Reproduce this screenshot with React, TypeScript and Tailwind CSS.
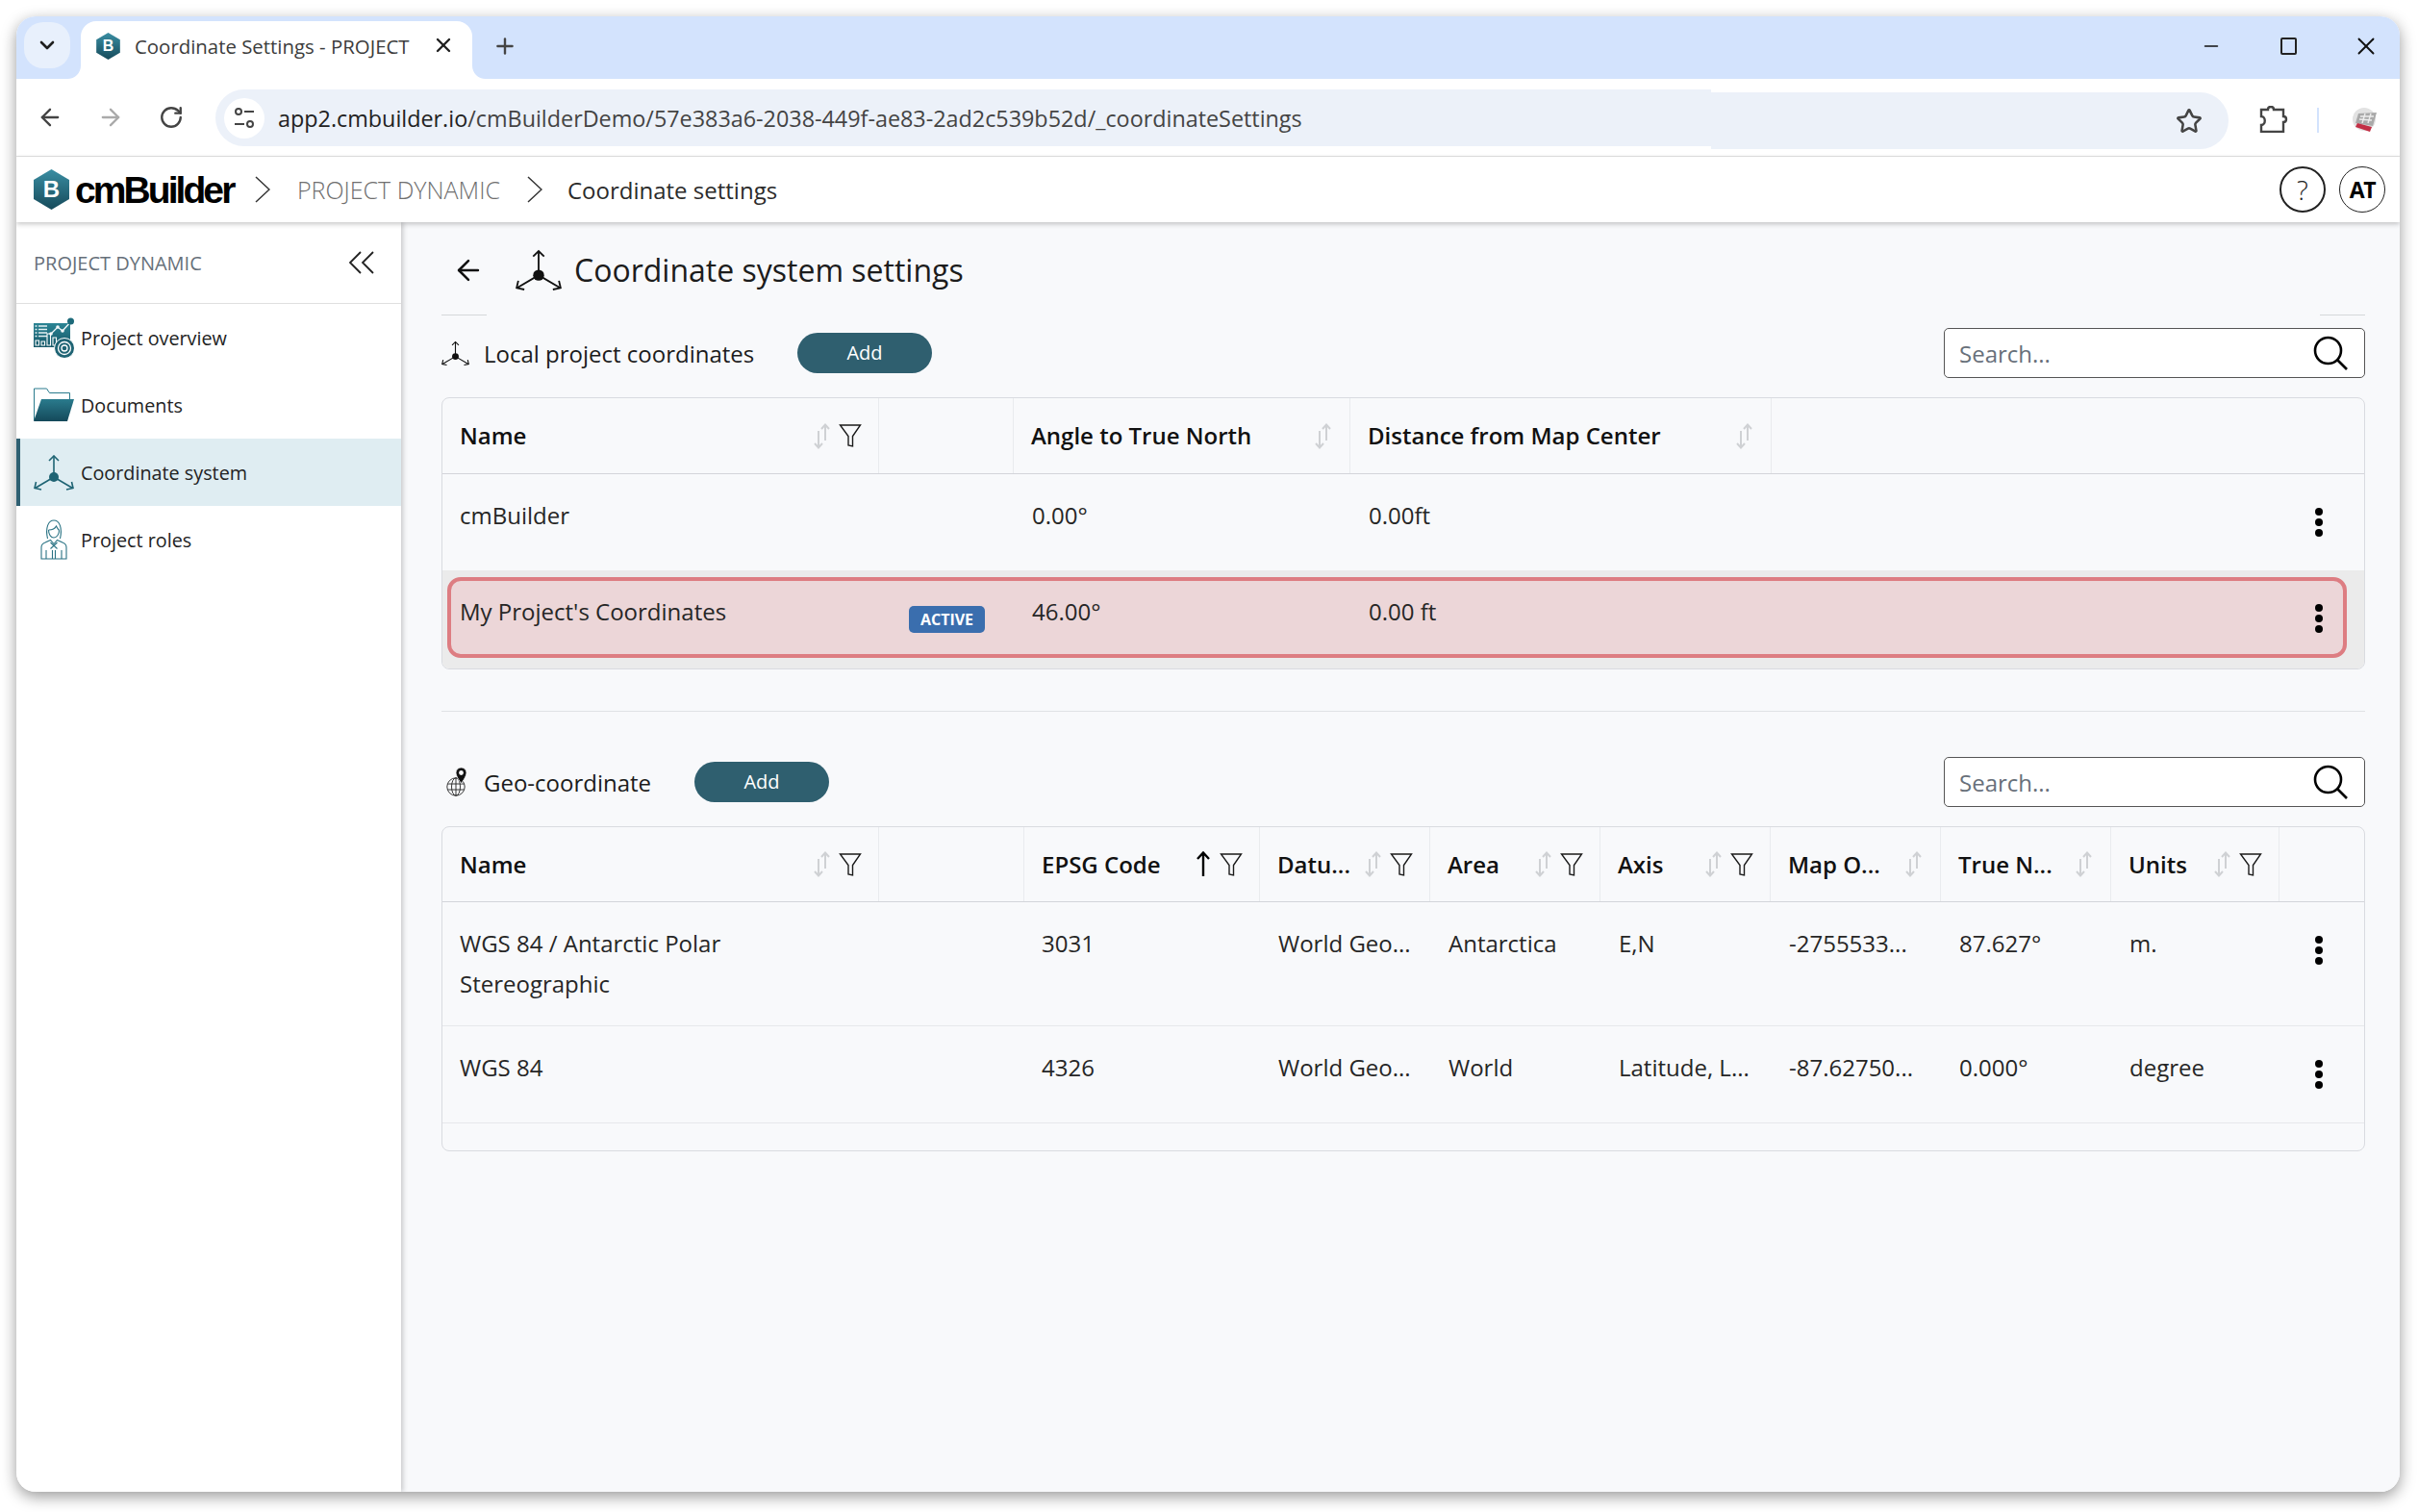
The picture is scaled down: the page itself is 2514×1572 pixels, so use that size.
import { ArrowLeft, ArrowRight, ChevronDown, Minus, Plus, RotateCw, Star, X } from 'lucide-react'
import type { ReactNode } from 'react'

function AxisIcon({ className }: { className: string }) {
  return (
    <svg className={className} viewBox="0 0 42 37" fill="none" stroke="currentColor" strokeWidth="1.6">
      <path d="M21 23V1M21 23L1.5 34.5M21 23l19.5 11.5" />
      <path d="M16 6l5-5 5 5M2.5 28l-1.5 6.5 7 1.5M39.5 28l1.5 6.5-7 1.5" />
      <circle cx="21" cy="23" r="5" fill="currentColor" stroke="none" />
    </svg>
  )
}

function HexLogo({ className }: { className: string }) {
  return (
    <svg className={className} viewBox="0 0 37 42">
      <defs>
        <linearGradient id="hexFill" x1="0" y1="0" x2="0" y2="1">
          <stop offset="0" stopColor="#3a8ea3" />
          <stop offset="1" stopColor="#164a5a" />
        </linearGradient>
      </defs>
      <path d="M18.5 0L37 11v20L18.5 42 0 31V11z" fill="url(#hexFill)" />
      <text x="18.5" y="29" textAnchor="middle" fontFamily="Liberation Sans, sans-serif" fontWeight="700" fontSize="24" fill="#fff">
        B
      </text>
    </svg>
  )
}

function OverviewIcon() {
  return (
    <svg className="h-[42px] w-[42px] shrink-0" viewBox="0 0 42 42">
      <defs>
        <linearGradient id="overviewFill" x1="0" y1="0" x2="0" y2="1">
          <stop offset="0" stopColor="#2b8494" />
          <stop offset="1" stopColor="#165868" />
        </linearGradient>
      </defs>
      <rect x="0" y="6" width="38" height="25" fill="url(#overviewFill)" />
      <path d="M1.5 9h2M5 9h9M1.5 12.5h2M5 12.5h9M1.5 16h2M5 16h9M1.5 19.5h2M5 19.5h9" stroke="#e3f0f2" strokeWidth="1.4" />
      <path d="M18 17l7-7 5 4 9-10" stroke="#f2f8f9" strokeWidth="1.3" fill="none" />
      <circle cx="18" cy="17" r="1.8" fill="#f2f8f9" />
      <circle cx="25" cy="10" r="1.8" fill="#f2f8f9" />
      <circle cx="30" cy="14" r="1.8" fill="#f2f8f9" />
      <circle cx="38.5" cy="4" r="3.5" fill="#1d6a7a" />
      <path d="M2 29v-5h3.5v5zM8 29v-4h3.5v4zM14 29V17h3.5v12zM20 29v-8h3.5v8z" stroke="#fff" strokeWidth="1.1" fill="none" />
      <circle cx="32" cy="32" r="10.5" fill="#1f6474" stroke="#fff" strokeWidth="1" />
      <circle cx="32" cy="32" r="6.5" fill="none" stroke="#fff" strokeWidth="1.3" />
      <circle cx="32" cy="32" r="3" fill="none" stroke="#fff" strokeWidth="1.3" />
    </svg>
  )
}

function FolderIcon() {
  return (
    <svg className="h-[36px] w-[42px] shrink-0" viewBox="0 0 42 36">
      <defs>
        <linearGradient id="folderFill" x1="0" y1="0" x2="0" y2="1">
          <stop offset="0" stopColor="#2a7b8d" />
          <stop offset="1" stopColor="#14495a" />
        </linearGradient>
      </defs>
      <path d="M.5 34V1h13l3 4.5h21V12" fill="none" stroke="#2a7b8d" strokeWidth="1" />
      <path d="M8 12h34l-7 23H0z" fill="url(#folderFill)" />
    </svg>
  )
}

function PersonIcon() {
  return (
    <svg className="mx-[7px] h-[42px] w-[28px] shrink-0" viewBox="0 0 28 42" fill="none" stroke="#2a7384" strokeWidth="1.1">
      <path d="M7.5 20C5 9 8 1 14 1s9 8 6.5 19" />
      <path d="M8.5 11c4 0 7-2 8-4 1 2 2 3.5 3 4.5M8.5 11c0 5 2.5 8 5.5 8s5.5-3.5 5.5-7.5" />
      <path d="M1 41V29c0-2.5 1.5-4 4-5l5.5-2.5 3.5 4 3.5-4L23 24c2.5 1 4 2.5 4 5v12z" />
      <path d="M10.5 24l7 6.5M17.5 24l-7 6.5M6 32v9M22 32v9M12.5 32v9M15.5 32v9" />
    </svg>
  )
}

function GeoIcon() {
  return (
    <svg className="h-[30px] w-[22px] shrink-0" viewBox="0 0 22 30" fill="none" stroke="#222" strokeWidth="0.9">
      <circle cx="10" cy="20" r="9.2" />
      <ellipse cx="10" cy="20" rx="4.5" ry="9.2" />
      <path d="M10 11v18M1.5 17h17M1.5 23h17" />
      <path d="M15.5 0C12 0 10 2.5 10 5.5c0 4 5.5 11 5.5 11S21 9.5 21 5.5C21 2.5 19 0 15.5 0z" fill="#111" stroke="#f8f9fb" strokeWidth="0.8" />
      <circle cx="15.5" cy="5.5" r="2.4" fill="#f8f9fb" stroke="none" />
    </svg>
  )
}

function SortIcon() {
  return (
    <svg className="h-[27px] w-[20px] shrink-0" viewBox="0 0 20 27" fill="none" stroke="#cfd1d4" strokeWidth="2">
      <path d="M13 18V2M9 6l4-4.5L17 6M6 8v17M2 21l4 4.5 4-4.5" />
    </svg>
  )
}

function SortUpIcon() {
  return (
    <svg className="h-[27px] w-[20px] shrink-0" viewBox="0 0 20 27" fill="none" stroke="#000" strokeWidth="2.4">
      <path d="M10 26V2M4 8l6-6.5L16 8" />
    </svg>
  )
}

function FilterIcon() {
  return (
    <svg className="ml-[7px] h-[24px] w-[24px] shrink-0" viewBox="0 0 24 24" fill="none" stroke="#1a1a1a" strokeWidth="1.4">
      <path d="M1.5 1h21L14.5 12.5V23l-4.5-1V12.5z" />
    </svg>
  )
}

function SearchBox() {
  return (
    <div className="flex h-[52px] w-[438px] items-center justify-between rounded-[5px] border border-[#555] bg-white pl-[15px] pr-[17px]">
      <span className="pt-[2px] text-[24px] text-[#68707a]">Search...</span>
      <svg className="h-[36px] w-[36px]" viewBox="0 0 36 36" fill="none" stroke="#000" strokeWidth="2.6">
        <circle cx="15.5" cy="15.5" r="13.5" />
        <path d="M25 25l10 10" />
      </svg>
    </div>
  )
}

function Kebab({ className }: { className: string }) {
  return (
    <div className={`flex flex-col gap-[3px] ${className}`}>
      <span className="h-[8px] w-[8px] rounded-full bg-black" />
      <span className="h-[8px] w-[8px] rounded-full bg-black" />
      <span className="h-[8px] w-[8px] rounded-full bg-black" />
    </div>
  )
}

function HeadCell({ label, sort = true, filter = false, up = false }: { label?: string; sort?: boolean; filter?: boolean; up?: boolean }) {
  return (
    <div className="flex min-w-0 items-center border-r border-[#e9ebee] pl-[18px] pr-[17px]">
      <span className="flex-1 whitespace-nowrap text-[24px] font-semibold text-[#111]">{label}</span>
      {label && sort && (up ? <SortUpIcon /> : <SortIcon />)}
      {label && filter && <FilterIcon />}
    </div>
  )
}

function Section({ icon, title, titleClass, children }: { icon: ReactNode; title: string; titleClass: string; children: ReactNode }) {
  return (
    <section>
      <div className="flex h-[52px] items-center">
        <div className={`flex items-center ${titleClass}`}>
          {icon}
          <h2 className="whitespace-nowrap pt-px text-[24px] text-[#1c1c1c]">{title}</h2>
        </div>
        <button className="h-[42px] w-[140px] rounded-full bg-[#2f5f6f] text-[20px] font-medium text-white" type="button">
          Add
        </button>
        <div className="flex-1" />
        <SearchBox />
      </div>
      <div className="mt-[20px] overflow-hidden rounded-[8px] border border-[#d9dbe0]">{children}</div>
    </section>
  )
}

const navItems = [
  { label: 'Project overview', icon: <OverviewIcon /> },
  { label: 'Documents', icon: <FolderIcon /> },
  { label: 'Coordinate system', icon: <AxisIcon className="h-[37px] w-[42px] shrink-0 text-[#1f6474]" />, active: true },
  { label: 'Project roles', icon: <PersonIcon /> },
]

const geoRows = [
  {
    name: 'WGS 84 / Antarctic Polar Stereographic',
    code: '3031',
    datum: 'World Geo...',
    area: 'Antarctica',
    axis: 'E,N',
    offset: '-2755533...',
    north: '87.627°',
    units: 'm.',
    height: 'h-[129px]',
  },
  {
    name: 'WGS 84',
    code: '4326',
    datum: 'World Geo...',
    area: 'World',
    axis: 'Latitude, L...',
    offset: '-87.62750...',
    north: '0.000°',
    units: 'degree',
    height: 'h-[101px]',
  },
]

function ChromeBar() {
  return (
    <>
      <div className="flex h-[65px] items-start bg-[#d3e3fd]">
        <div className="ml-[8px] mt-[6px] flex h-[48px] w-[48px] items-center justify-center rounded-[20px] bg-[#e8f0fc]">
          <ChevronDown size={24} strokeWidth={2.6} className="text-[#1f1f1f]" />
        </div>
        <div className="relative ml-[11px] mt-[5px] flex h-[60px] w-[407px] items-start rounded-t-[16px] bg-white pl-[16px] pt-[11px]">
          <svg className="absolute -left-[14px] bottom-0 h-[14px] w-[14px]" viewBox="0 0 14 14">
            <path d="M14 0v14H0c8 0 14-6 14-14z" fill="#fff" />
          </svg>
          <svg className="absolute -right-[14px] bottom-0 h-[14px] w-[14px]" viewBox="0 0 14 14">
            <path d="M0 0v14h14C6 14 0 8 0 0z" fill="#fff" />
          </svg>
          <HexLogo className="mt-[1px] h-[28px] w-[25px] shrink-0" />
          <div className="ml-[15px] w-[283px] whitespace-nowrap text-[20.4px] text-[#3c3c3c]">Coordinate Settings - PROJECT</div>
          <X size={24} strokeWidth={2.4} className="ml-[26px] mt-[2px] text-[#222]" />
        </div>
        <Plus size={26} strokeWidth={2.2} className="ml-[21px] mt-[18px] text-[#444]" />
        <div className="flex-1" />
        <Minus size={22} strokeWidth={1.8} className="mt-[20px] text-[#111]" />
        <div className="ml-[61px] mt-[22px] h-[18px] w-[17px] rounded-[2px] border-2 border-[#222]" />
        <X size={30} strokeWidth={1.5} className="ml-[57px] mr-[20px] mt-[16px] text-[#111]" />
      </div>
      <div className="flex h-[81px] items-start rounded-t-[10px] border-b border-[#e2e2e2] bg-white">
        <ArrowLeft size={28} strokeWidth={2} className="ml-[21px] mt-[26px] text-[#444]" />
        <ArrowRight size={28} strokeWidth={2} className="ml-[35px] mt-[26px] text-[#aaa]" />
        <RotateCw size={26} strokeWidth={2.2} className="ml-[36px] mt-[27px] text-[#444]" />
        <div className="ml-[33px] mt-[11px] flex h-[59px] w-[1555px] items-center rounded-l-full bg-[#ecf1f9] pl-[9px]">
          <div className="flex h-[42px] w-[42px] items-center justify-center rounded-full bg-white">
            <svg className="h-[26px] w-[26px]" viewBox="0 0 26 26" fill="none" stroke="#444" strokeWidth="2">
              <circle cx="7" cy="6" r="3" />
              <path d="M13 6h10M3 19h10" />
              <circle cx="19" cy="19" r="3" />
            </svg>
          </div>
          <span className="ml-[14px] whitespace-nowrap pt-[2px] text-[23.35px] text-[#222]">
            app2.cmbuilder.io<span className="text-[#444]">/cmBuilderDemo/57e383a6-2038-449f-ae83-2ad2c539b52d/_coordinateSettings</span>
          </span>
        </div>
        <div className="mt-[14px] flex h-[59px] w-[538px] items-center justify-end rounded-r-full bg-[#ecf1f9] pr-[27px]">
          <Star size={28} strokeWidth={2.2} className="text-[#444]" />
        </div>
        <svg className="ml-[32px] mt-[28px] h-[28px] w-[30px]" viewBox="0 0 30 28" fill="none" stroke="#444" strokeWidth="2.4">
          <path d="M2 4h7c0-4 6-4 6 0h10v7c4 0 4 6 0 6v10H2v-7c5 0 5-9 0-9z" />
        </svg>
        <div className="ml-[30px] mt-[30px] h-[26px] w-[2px] bg-[#d3e3fd]" />
        <svg className="ml-[32px] mt-[28px] h-[28px] w-[30px]" viewBox="0 0 30 28">
          <circle cx="15" cy="14" r="12" fill="#e2e2e2" />
          <path d="M9 8l19-1-4 14-18-3z" fill="#a9a9a9" />
          <path d="M11 11l14 0M10 14l13 1M16 8l-3 10M22 8l-3 10" stroke="#ececec" strokeWidth="1.4" />
          <path d="M8 18l15 4-2 5-15-5z" fill="#c22f45" />
        </svg>
      </div>
    </>
  )
}

function AppHeader() {
  return (
    <header className="relative z-20 flex h-[68px] items-center bg-white pl-[18px] shadow-[0_2px_5px_rgba(0,0,0,0.22)]">
      <HexLogo className="h-[42px] w-[37px]" />
      <span className="ml-[6px] w-[168px] whitespace-nowrap font-['Liberation_Sans',sans-serif] text-[39px] font-bold leading-none tracking-[-0.075em] text-black">
        cmBuilder
      </span>
      <svg className="ml-[19px] h-[28px] w-[16px]" viewBox="0 0 16 28" fill="none" stroke="#333" strokeWidth="1.5">
        <path d="M1 1l14 13L1 27" />
      </svg>
      <span className="ml-[28px] whitespace-nowrap pt-[2px] text-[25px] font-light text-[#6f6f6f]">PROJECT DYNAMIC</span>
      <svg className="ml-[28px] h-[28px] w-[16px]" viewBox="0 0 16 28" fill="none" stroke="#333" strokeWidth="1.5">
        <path d="M1 1l14 13L1 27" />
      </svg>
      <span className="ml-[26px] whitespace-nowrap pt-[2px] text-[24px] text-[#2b2b2b]">Coordinate settings</span>
      <div className="flex-1" />
      <div className="flex h-[48px] w-[48px] items-center justify-center rounded-full border-2 border-[#222] text-[28px] font-light text-[#222]">?</div>
      <div className="ml-[14px] mr-[15px] flex h-[48px] w-[48px] items-center justify-center rounded-full border border-[#222] text-[23px] font-bold tracking-[-0.06em] text-black">AT</div>
    </header>
  )
}

function Sidebar() {
  return (
    <aside className="relative z-10 w-[400px] shrink-0 bg-white shadow-[2px_0_5px_rgba(0,0,0,0.2)]">
      <div className="flex h-[85px] items-center justify-between border-b border-[#e0e0e0] pl-[18px] pr-[28px]">
        <span className="whitespace-nowrap pt-px text-[20px] text-[#66707a]">PROJECT DYNAMIC</span>
        <svg className="h-[24px] w-[27px]" viewBox="0 0 27 24" fill="none" stroke="#222" strokeWidth="1.8">
          <path d="M13 1L2 12l11 11M26 1L15 12l11 11" />
        </svg>
      </div>
      {navItems.map((item) => (
        <div
          key={item.label}
          className={item.active ? 'flex h-[70px] items-center border-l-4 border-[#2f6072] bg-[#dfedf2] pl-[14px]' : 'flex h-[70px] items-center pl-[18px]'}
        >
          {item.icon}
          <span className="ml-[7px] whitespace-nowrap pt-[2px] text-[19.8px] text-[#222]">{item.label}</span>
        </div>
      ))}
    </aside>
  )
}

function LocalTable() {
  return (
    <>
      <div className="grid h-[79px] grid-cols-[454px_140px_350px_438px_1fr] border-b border-[#d3d5da]">
        <HeadCell label="Name" filter />
        <HeadCell />
        <HeadCell label="Angle to True North" />
        <HeadCell label="Distance from Map Center" />
        <div />
      </div>
      <div className="grid h-[100px] grid-cols-[454px_140px_350px_438px_1fr] pt-[22px] text-[24px] leading-[42px] text-[#262626]">
        <div className="pl-[18px]">cmBuilder</div>
        <div />
        <div className="pl-[19px]">0.00°</div>
        <div className="pl-[19px]">0.00ft</div>
        <div className="flex justify-end pr-[43px]">
          <Kebab className="mt-[13px]" />
        </div>
      </div>
      <div className="h-[102px] bg-[#ebebeb] pb-[11px] pl-[5px] pr-[18px] pt-[7px]">
        <div className="grid h-[84px] grid-cols-[445px_140px_350px_438px_1fr] rounded-[14px] border-4 border-[#dd7d82] bg-[#ecd6d8] pt-[11px] text-[24px] leading-[42px] text-[#262626]">
          <div className="pl-[9px]">My Project's Coordinates</div>
          <div className="pl-[31px] pt-[15px]">
            <div className="flex h-[28px] w-[79px] items-center justify-center rounded-[5px] bg-[#3a6eae] text-[16px] font-bold leading-none text-white">ACTIVE</div>
          </div>
          <div className="pl-[19px]">46.00°</div>
          <div className="pl-[19px]">0.00 ft</div>
          <div className="flex justify-end pr-[21px]">
            <Kebab className="mt-[13px]" />
          </div>
        </div>
      </div>
    </>
  )
}

function GeoTable() {
  return (
    <>
      <div className="grid h-[78px] grid-cols-[454px_151px_245px_177px_177px_177px_177px_177px_175px_1fr] border-b border-[#d3d5da]">
        <HeadCell label="Name" filter />
        <HeadCell />
        <HeadCell label="EPSG Code" up filter />
        <HeadCell label="Datu..." filter />
        <HeadCell label="Area" filter />
        <HeadCell label="Axis" filter />
        <HeadCell label="Map O..." />
        <HeadCell label="True N..." />
        <HeadCell label="Units" filter />
        <div />
      </div>
      {geoRows.map((row) => (
        <div
          key={row.code}
          className={`grid ${row.height} grid-cols-[454px_151px_245px_177px_177px_177px_177px_177px_175px_1fr] border-b border-[#e6e8eb] pt-[22px] text-[24px] leading-[42px] text-[#262626]`}
        >
          <div className="max-w-[330px] pl-[18px]">{row.name}</div>
          <div />
          <div className="pl-[18px]">{row.code}</div>
          <div className="pl-[19px]">{row.datum}</div>
          <div className="pl-[19px]">{row.area}</div>
          <div className="whitespace-nowrap pl-[19px]">{row.axis}</div>
          <div className="whitespace-nowrap pl-[19px]">{row.offset}</div>
          <div className="pl-[19px]">{row.north}</div>
          <div className="pl-[19px]">{row.units}</div>
          <div className="flex justify-end pr-[43px]">
            <Kebab className="mt-[13px]" />
          </div>
        </div>
      ))}
      <div className="h-[28px]" />
    </>
  )
}

export default function App() {
  return (
    <div className="h-[1572px] w-[2514px] bg-white pl-[17px] pt-[17px] font-['Open_Sans',sans-serif]">
      <div className="flex h-[1534px] w-[2478px] flex-col overflow-hidden rounded-[20px] shadow-[0_5px_16px_rgba(0,0,0,0.4)]">
        <ChromeBar />
        <AppHeader />
        <div className="flex min-h-0 flex-1">
          <Sidebar />
          <main className="min-w-0 flex-1 bg-[#f8f9fb] pl-[42px] pr-[36px] pt-[4px]">
            {/* Title */}
            <div className="flex h-[92px] items-center">
              <ArrowLeft size={34} strokeWidth={1.8} className="ml-[11px] text-[#111]" />
              <AxisIcon className="ml-[32px] h-[44px] w-[48px] text-[#111]" />
              <h1 className="ml-[13px] whitespace-nowrap text-[32px] text-[#1c1c1c]">Coordinate system settings</h1>
            </div>
            <div className="flex h-px justify-between">
              <div className="w-[47px] bg-[#d5d7da]" />
              <div className="w-[47px] bg-[#d5d7da]" />
            </div>
            <div className="pt-[13px]">
              <Section icon={<AxisIcon className="mr-[15px] h-[27px] w-[29px] text-[#111]" />} title="Local project coordinates" titleClass="w-[370px]">
                <LocalTable />
              </Section>
            </div>
            <div className="mt-[43px] h-px bg-[#e0e2e5]" />
            <div className="pt-[47px]">
              <Section icon={<GeoIcon />} title="Geo-coordinate" titleClass="w-[263px] gap-[17px] pl-[5px]">
                <GeoTable />
              </Section>
            </div>
          </main>
        </div>
      </div>
    </div>
  )
}
